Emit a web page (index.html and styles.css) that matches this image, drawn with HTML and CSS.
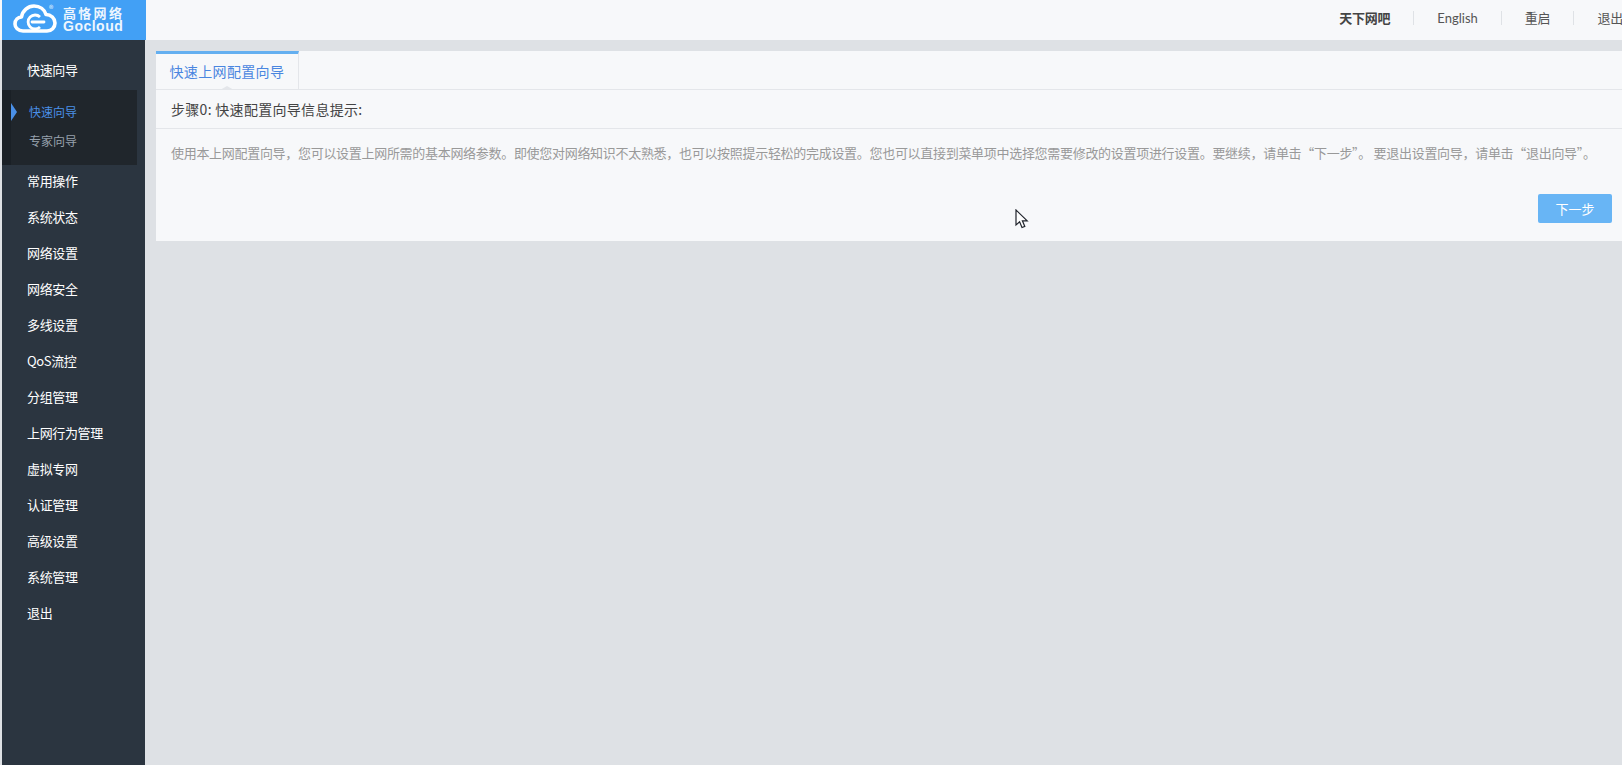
FILE: index.html
```html
<!DOCTYPE html>
<html lang="zh-CN">
<head>
<meta charset="utf-8">
<title>高恪网络 Gocloud</title>
<link rel="stylesheet" href="styles.css">
</head>
<body>
<header class="topbar">
  <div class="logo">
    <svg class="logo-cloud" viewBox="0 0 44 29" width="44" height="29" aria-hidden="true">
      <path d="M10 27C5 27 2 23.5 2 20C2 16 5 13.3 8.5 13C9.5 6.5 15 2 21 2C27 2 31.5 5.5 33 10.5C38 10.5 42 14.5 42 19C42 23.5 38.5 27 34 27Z" fill="none" stroke="#fff" stroke-width="3.6" stroke-linejoin="round"/>
      <path d="M27 13A7 7 0 1 0 27 23" fill="none" stroke="#fff" stroke-width="2.8"/>
      <path d="M19 18H31" stroke="#fff" stroke-width="2.8" stroke-linecap="round"/>
    </svg>
    <span class="logo-reg">®</span>
    <div class="logo-text">
      <span class="logo-cn">高恪网络</span>
      <span class="logo-en">Gocloud</span>
    </div>
  </div>
  <nav class="top-nav">
    <a class="top-link top-link-strong">天下网吧</a>
    <a class="top-link top-link-en">English</a>
    <a class="top-link">重启</a>
    <a class="top-link">退出</a>
  </nav>
</header>
<div class="body-row">
  <aside class="sidebar">
    <ul class="menu">
      <li class="menu-item">快速向导</li>
      <li class="submenu">
        <div class="sub-item sub-active">快速向导</div>
        <div class="sub-item">专家向导</div>
      </li>
      <li class="menu-item">常用操作</li>
      <li class="menu-item">系统状态</li>
      <li class="menu-item">网络设置</li>
      <li class="menu-item">网络安全</li>
      <li class="menu-item">多线设置</li>
      <li class="menu-item">QoS流控</li>
      <li class="menu-item">分组管理</li>
      <li class="menu-item">上网行为管理</li>
      <li class="menu-item">虚拟专网</li>
      <li class="menu-item">认证管理</li>
      <li class="menu-item">高级设置</li>
      <li class="menu-item">系统管理</li>
      <li class="menu-item">退出</li>
    </ul>
  </aside>
  <main class="content">
    <section class="panel">
      <div class="tabs"><div class="tab">快速上网配置向导</div></div>
      <div class="step">步骤0: 快速配置向导信息提示:</div>
      <p class="desc">使用本上网配置向导，您可以设置上网所需的基本网络参数。即使您对网络知识不太熟悉，也可以按照提示轻松的完成设置。您也可以直接到菜单项中选择您需要修改的设置项进行设置。要继续，请单击“下一步”。 要退出设置向导，请单击“退出向导”。</p>
      <div class="actions"><button class="btn">下一步</button></div>
    </section>
  </main>
</div>
<svg class="cursor" width="14" height="20" viewBox="0 0 14 20" aria-hidden="true">
  <path d="M1 1V16L4.6 12.8L7 18.5L9.8 17.4L7.4 11.8H12.2Z" fill="#fff" stroke="#20242c" stroke-width="1.2" stroke-linejoin="miter"/>
</svg>
</body>
</html>
```
FILE: styles.css
```css
* { box-sizing: border-box; }
html, body { margin: 0; height: 100%; }
body {
  width: 1622px;
  height: 765px;
  overflow: hidden;
  position: relative;
  display: flex;
  flex-direction: column;
  background: #dee1e5;
  font-family: "Noto Sans CJK SC", "Noto Sans", sans-serif;
  font-size: 13px;
}
.topbar {
  height: 40px;
  flex: none;
  display: flex;
  justify-content: space-between;
  background: #f7f8fa;
}
.logo {
  width: 144px;
  margin-left: 2px;
  padding-left: 11px;
  background: #42a0f5;
  display: flex;
  align-items: center;
  color: #eef6fe;
  position: relative;
}
.logo-cloud { flex: none; margin-top: -3px; }
.logo-reg {
  position: absolute;
  left: 47px;
  top: 4px;
  font-size: 9px;
  line-height: 10px;
}
.logo-text {
  display: flex;
  flex-direction: column;
  margin-left: 6px;
  margin-top: -2px;
  width: 62px;
}
.logo-cn {
  font-size: 13px;
  line-height: 13px;
  font-weight: 700;
  letter-spacing: 2.3px;
  white-space: nowrap;
}
.logo-en {
  font-family: "Liberation Sans", sans-serif;
  font-size: 14px;
  line-height: 14px;
  font-weight: 700;
  letter-spacing: .5px;
}
.top-nav {
  display: flex;
  align-items: center;
  margin-right: -24px;
  padding-bottom: 5px;
}
.top-link {
  color: #555;
  line-height: 14px;
  padding: 0 23px;
  border-left: 1px solid #dfe2e6;
  white-space: nowrap;
  letter-spacing: -.2px;
}
.top-link-en {
  font-family: "Lato", sans-serif;
  letter-spacing: 0;
}
.top-link-strong {
  border-left: 0;
  color: #444;
  font-weight: 700;
}
.body-row {
  flex: 1;
  min-height: 0;
  display: flex;
}
.sidebar {
  width: 143px;
  margin-left: 2px;
  flex: none;
  background: #2b3540;
  padding-top: 12px;
}
.menu {
  list-style: none;
  margin: 0;
  padding: 0;
}
.menu-item {
  height: 36px;
  line-height: 36px;
  padding-left: 25px;
  color: #fff;
  letter-spacing: -.35px;
}
.submenu {
  width: 135px;
  height: 75px;
  margin: 2px 0 -2px;
  padding: 7px 0 0 18px;
  background: #20262c;
  border-left: 9px solid #1a2026;
  position: relative;
}
.sub-item {
  height: 29px;
  line-height: 29px;
  font-size: 12px;
  color: #97a1ad;
}
.sub-active { color: #4a90e8; }
.sub-active::before {
  content: "";
  position: absolute;
  left: 0;
  top: 13px;
  border-left: 6px solid #4a90e8;
  border-top: 9px solid transparent;
  border-bottom: 9px solid transparent;
}
.content {
  flex: 1;
  min-width: 0;
  padding: 11px 0 0 11px;
}
.panel {
  height: 190px;
  background: #f7f8fa;
  display: flex;
  flex-direction: column;
}
.tabs {
  height: 39px;
  flex: none;
  border-bottom: 1px solid #e4e6ea;
}
.tab {
  width: 143px;
  height: 38px;
  border-top: 3px solid #64aff0;
  border-right: 1px solid #e4e6ea;
  padding-left: 13.5px;
  line-height: 35px;
  font-size: 14px;
  letter-spacing: .35px;
  color: #4a86e0;
  position: relative;
}
.tab::after {
  content: "";
  position: absolute;
  left: 64px;
  bottom: -1px;
  border-left: 7px solid transparent;
  border-right: 7px solid transparent;
  border-bottom: 4px solid #e4e6ea;
}
.step {
  height: 39px;
  flex: none;
  padding-left: 15px;
  line-height: 38px;
  font-size: 14px;
  letter-spacing: .3px;
  color: #444;
  border-bottom: 1px solid #e4e6ea;
}
.desc {
  margin: 0;
  padding: 14px 0 0 15px;
  line-height: 20px;
  letter-spacing: -.3px;
  color: #999;
  white-space: nowrap;
}
.actions {
  margin-top: auto;
  padding: 0 10px 18px 0;
  display: flex;
  justify-content: flex-end;
}
.btn {
  width: 74px;
  height: 29px;
  border: 0;
  border-radius: 2px;
  background: #68b5f5;
  color: #fff;
  font: inherit;
  padding: 0;
}
.cursor {
  position: absolute;
  left: 1015px;
  top: 209px;
}
```
